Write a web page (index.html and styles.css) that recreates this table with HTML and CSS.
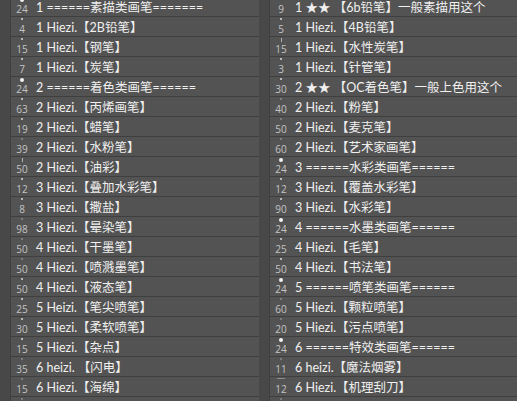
FILE: index.html
```html
<!DOCTYPE html>
<html lang="zh">
<head>
    <meta charset="utf-8">
    <title>画笔预设</title>
    <link rel="stylesheet" href="styles.css">
</head>
<body>
    <div class="panel">
        <div class="col">
            <div class="row"><div class="size"><i class="dot big"></i>24</div><span class="name">1 ======素描类画笔=======</span></div>
            <div class="row"><div class="size"><i class="dot"></i>4</div><span class="name">1 Hiezi.【2B铅笔】</span></div>
            <div class="row"><div class="size"><i class="dot"></i>15</div><span class="name">1 Hiezi.【钢笔】</span></div>
            <div class="row"><div class="size"><i class="dot"></i>7</div><span class="name">1 Hiezi.【炭笔】</span></div>
            <div class="row"><div class="size"><i class="dot big"></i>24</div><span class="name">2 ======着色类画笔======</span></div>
            <div class="row"><div class="size"><i class="dot"></i>63</div><span class="name">2 Hiezi.【丙烯画笔】</span></div>
            <div class="row"><div class="size"><i class="dot"></i>19</div><span class="name">2 Hiezi.【蜡笔】</span></div>
            <div class="row"><div class="size"><i class="dot dim"></i>39</div><span class="name">2 Hiezi.【水粉笔】</span></div>
            <div class="row"><div class="size"><i class="dot line"></i>50</div><span class="name">2 Hiezi.【油彩】</span></div>
            <div class="row"><div class="size"><i class="dot"></i>12</div><span class="name">3 Hiezi.【叠加水彩笔】</span></div>
            <div class="row"><div class="size"><i class="dot"></i>8</div><span class="name">3 Hiezi.【撒盐】</span></div>
            <div class="row"><div class="size"><i class="dot dim"></i>98</div><span class="name">3 Hiezi.【晕染笔】</span></div>
            <div class="row"><div class="size"><i class="dot dim"></i>50</div><span class="name">4 Hiezi.【干墨笔】</span></div>
            <div class="row"><div class="size"><i class="dot dim"></i>50</div><span class="name">4 Hiezi.【喷溅墨笔】</span></div>
            <div class="row"><div class="size"><i class="dot"></i>50</div><span class="name">4 Hiezi.【液态笔】</span></div>
            <div class="row"><div class="size"><i class="dot"></i>25</div><span class="name">5 Heizi.【笔尖喷笔】</span></div>
            <div class="row"><div class="size"><i class="dot"></i>30</div><span class="name">5 Hiezi.【柔软喷笔】</span></div>
            <div class="row"><div class="size"><i class="dot"></i>15</div><span class="name">5 Hiezi.【杂点】</span></div>
            <div class="row"><div class="size"><i class="dot dim"></i>35</div><span class="name">6 heizi. 【闪电】</span></div>
            <div class="row"><div class="size"><i class="dot dim"></i>15</div><span class="name">6 Hiezi.【海绵】</span></div>
            <div class="row"><div class="size"><i class="dot dim"></i></div><span class="name"></span></div>
        </div>
        <div class="col">
            <div class="row"><div class="size"><i class="dot"></i>9</div><span class="name">1 ★★ 【6b铅笔】一般素描用这个</span></div>
            <div class="row"><div class="size"><i class="dot"></i>5</div><span class="name">1 Hiezi.【4B铅笔】</span></div>
            <div class="row"><div class="size"><i class="dot line"></i>15</div><span class="name">1 Hiezi.【水性炭笔】</span></div>
            <div class="row"><div class="size"><i class="dot"></i>3</div><span class="name">1 Hiezi.【针管笔】</span></div>
            <div class="row"><div class="size"><i class="dot"></i>30</div><span class="name">2 ★★ 【OC着色笔】一般上色用这个</span></div>
            <div class="row"><div class="size"><i class="dot dim"></i>40</div><span class="name">2 Hiezi.【粉笔】</span></div>
            <div class="row"><div class="size"><i class="dot dim"></i>50</div><span class="name">2 Hiezi.【麦克笔】</span></div>
            <div class="row"><div class="size"><i class="dot dim"></i>60</div><span class="name">2 Hiezi.【艺术家画笔】</span></div>
            <div class="row"><div class="size"><i class="dot big"></i>24</div><span class="name">3 ======水彩类画笔======</span></div>
            <div class="row"><div class="size"><i class="dot"></i>12</div><span class="name">3 Hiezi.【覆盖水彩笔】</span></div>
            <div class="row"><div class="size"><i class="dot"></i>90</div><span class="name">3 Hiezi.【水彩笔】</span></div>
            <div class="row"><div class="size"><i class="dot big"></i>24</div><span class="name">4 ======水墨类画笔======</span></div>
            <div class="row"><div class="size"><i class="dot"></i>25</div><span class="name">4 Hiezi.【毛笔】</span></div>
            <div class="row"><div class="size"><i class="dot"></i>50</div><span class="name">4 Hiezi.【书法笔】</span></div>
            <div class="row"><div class="size"><i class="dot big"></i>24</div><span class="name">5 ======喷笔类画笔======</span></div>
            <div class="row"><div class="size"><i class="dot dim"></i>60</div><span class="name">5 Hiezi.【颗粒喷笔】</span></div>
            <div class="row"><div class="size"><i class="dot dim"></i>20</div><span class="name">5 Hiezi.【污点喷笔】</span></div>
            <div class="row"><div class="size"><i class="dot big"></i>24</div><span class="name">6 ======特效类画笔======</span></div>
            <div class="row"><div class="size"><i class="dot dim"></i>11</div><span class="name">6 heizi.【魔法烟雾】</span></div>
            <div class="row"><div class="size"><i class="dot wide"></i>12</div><span class="name">6 Hiezi.【机理刮刀】</span></div>
            <div class="row"><div class="size"><i class="dot dim"></i></div><span class="name"></span></div>
        </div>
    </div>
</body>
</html>
```

FILE: styles.css
```css
* {
    margin: 0;
    padding: 0;
    box-sizing: border-box;
}

html, body {
    height: 401px;
    overflow: hidden;
}

body {
    background: #535353;
    font-family: "Lato", "Noto Sans CJK SC", sans-serif;
    color: #f0f0f0;
}

.panel {
    display: grid;
    grid-template-columns: 259px 258px;
    margin-top: -3px;
}

.col {
    border-left: 10px solid #484848;
    display: flex;
    flex-direction: column;
}

.row {
    height: 20px;
    display: flex;
    align-items: center;
    border-bottom: 1px solid #3f3f3f;
    border-left: 1px solid #3f3f3f;
}

.size {
    width: 17px;
    height: 19px;
    display: flex;
    flex-direction: column;
    align-items: center;
    justify-content: space-between;
    font-family: "Open Sans", sans-serif;
    font-size: 10px;
    line-height: 9px;
    color: #c4c4c4;
    padding: 1px 0 2px 5px;
}

.dot {
    width: 2px;
    height: 2px;
    border-radius: 50%;
    background: #d8d8d8;
}

.dot.big {
    width: 4px;
    height: 4px;
    background: #f2f2f2;
}

.dot.dim {
    background: #8a8a8a;
}

.dot.line {
    width: 1px;
    height: 4px;
    border-radius: 0;
    background: #b0b0b0;
}

.dot.wide {
    width: 8px;
    height: 1px;
    border-radius: 0;
    background: #8a8a8a;
}

.name {
    margin-left: 8px;
    font-size: 12.5px;
    white-space: nowrap;
}
```
